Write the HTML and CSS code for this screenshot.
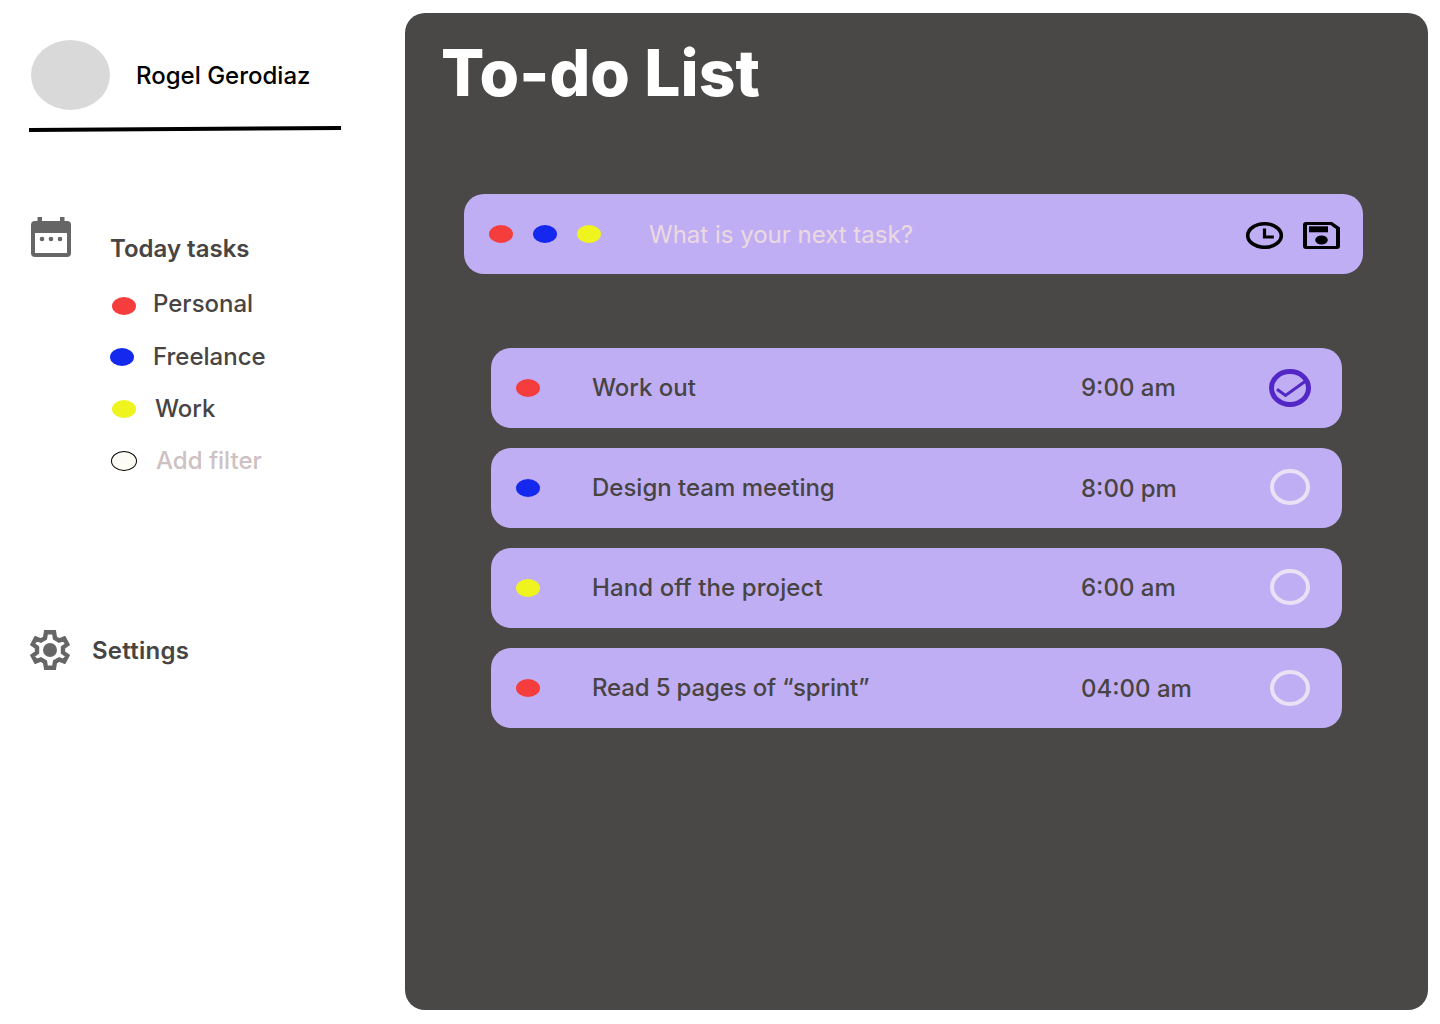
FILE: index.html
```html
<!DOCTYPE html>
<html lang="en">
<head>
<meta charset="utf-8">
<title>To-do List</title>
<link rel="stylesheet" href="styles.css">
</head>
<body>
<div class="app">
  <aside class="sidebar">
    <div class="profile">
      <span class="avatar"></span>
      <span class="profile-name">Rogel Gerodiaz</span>
    </div>
    <svg class="divider" width="312" height="7" viewBox="0 0 312 7"><path d="M0 5 312 3" stroke="#000" stroke-width="4"/></svg>
    <nav class="today">
      <svg class="calendar" width="40" height="40" viewBox="0 0 40 40"><path fill="#666" fill-rule="evenodd" d="M6.500 0h4.500v4h18V0h4.500v4H36a4 4 0 0 1 4 4v28a4 4 0 0 1-4 4H4a4 4 0 0 1-4-4V8a4 4 0 0 1 4-4h2.500zM4 16v20h32V16z"/><g fill="#666"><circle cx="11" cy="22" r="2.300"/><circle cx="20" cy="22" r="2.300"/><circle cx="29" cy="22" r="2.300"/></g></svg>
      <div class="filters">
        <h2 class="nav-title">Today tasks</h2>
        <div class="filter filter-personal"><i class="dot red"></i><span>Personal</span></div>
        <div class="filter filter-freelance"><i class="dot blue"></i><span>Freelance</span></div>
        <div class="filter filter-work"><i class="dot yellow"></i><span>Work</span></div>
        <div class="filter filter-add"><i class="dot empty"></i><span>Add filter</span></div>
      </div>
    </nav>
    <div class="settings">
      <svg width="40" height="40" viewBox="0 0 40 40"><path fill="none" stroke="#666" stroke-width="4.400" d="M16 2.200H24L25 8.200L29.100 10.500L34.200 8.600L37.300 14.300L33 17.500V22.500L37.300 25.700L34.200 31.400L29.100 29.500L25 31.800L24 37.800H16L15 31.800L10.900 29.500L5.800 31.400L2.700 25.700L7 22.500V17.500L2.700 14.300L5.800 8.600L10.900 10.500L15 8.200Z"/><circle cx="20" cy="20" r="7" fill="#666"/></svg>
      <span>Settings</span>
    </div>
  </aside>
  <main class="panel">
    <h1 class="title">To-do List</h1>
    <div class="new-task">
      <i class="dot red"></i><i class="dot blue"></i><i class="dot yellow"></i>
      <span class="prompt">What is your next task?</span>
      <svg class="clock" width="38" height="28" viewBox="0 0 38 28"><ellipse cx="19.500" cy="14.500" rx="16.800" ry="11.800" fill="none" stroke="#000" stroke-width="3.600"/><path d="M19.500 7.500v8.500h9.300" fill="none" stroke="#000" stroke-width="3.200"/></svg>
      <svg class="save" width="38" height="28" viewBox="0 0 38 28"><path fill-rule="evenodd" d="M4 1H30L38 6.500V25a3 3 0 0 1-3 3H4a3 3 0 0 1-3-3V4a3 3 0 0 1 3-3ZM5 4V25H34V8L28.500 4Z"/><path d="M7 5.300h19v6H7z"/><ellipse cx="19.500" cy="19" rx="6.300" ry="4.600"/></svg>
    </div>
    <div class="tasks">
      <div class="task"><i class="dot red"></i><span class="name">Work out</span><span class="time">9:00 am</span>
        <svg width="42" height="38" viewBox="0 0 42 38"><ellipse cx="21" cy="19" rx="18.500" ry="16.500" fill="none" stroke="#5227c5" stroke-width="5"/><path d="M8 20.300 16.500 26.500 37 11.800" fill="none" stroke="#5227c5" stroke-width="3"/></svg></div>
      <div class="task"><i class="dot blue"></i><span class="name">Design team meeting</span><span class="time lowered">8:00 pm</span>
        <svg class="open" width="42" height="38" viewBox="0 0 42 38"><ellipse cx="21" cy="19" rx="18" ry="16" fill="none" stroke="#e9e2f5" stroke-width="4"/></svg></div>
      <div class="task"><i class="dot yellow"></i><span class="name loose">Hand off the project</span><span class="time">6:00 am</span>
        <svg class="open" width="42" height="38" viewBox="0 0 42 38"><ellipse cx="21" cy="19" rx="18" ry="16" fill="none" stroke="#e9e2f5" stroke-width="4"/></svg></div>
      <div class="task"><i class="dot red"></i><span class="name tight">Read 5 pages of “sprint”</span><span class="time lowered">04:00 am</span>
        <svg width="42" height="38" viewBox="0 0 42 38"><ellipse cx="21" cy="19" rx="18" ry="16" fill="none" stroke="#e9e2f5" stroke-width="4"/></svg></div>
    </div>
  </main>
</div>
</body>
</html>
```
FILE: styles.css
```css
* { box-sizing: border-box; }
body {
  margin: 0;
  background: #fff;
  color: #474443;
  font: 500 24px/29px Inter, sans-serif;
}
h1, h2 { margin: 0; }
svg { display: block; flex: none; }
.app { display: flex; height: 1024px; padding: 13px 12px 14px 0; }
.sidebar { width: 405px; flex: none; padding: 27px 0 0 29px; }
.profile { display: flex; align-items: center; height: 70px; padding-left: 2px; gap: 26px; color: #000; }
.avatar { width: 79px; height: 70px; border-radius: 50%; background: #d9d9d9; }
.profile-name { white-space: nowrap; }
.divider { margin-top: 15px; }
.today { display: flex; margin-top: 85px; padding-left: 2px; }
.filters { padding: 17px 0 0 39px; }
.nav-title { font-size: 24px; line-height: 29px; font-weight: 600; }
.dot { display: block; flex: none; width: 24px; height: 18px; border-radius: 50%; }
.red { background: #f53d3d; }
.blue { background: #1429ed; }
.yellow { background: #eff41e; }
.empty { width: 26px; height: 20px; background: #fcfcf4; border: 1px solid #000; }
.filter { display: flex; align-items: center; height: 29px; margin-top: 23px; white-space: nowrap; }
.filter-personal { margin-top: 26px; gap: 17px; padding-left: 2px; }
.filter-personal .dot { margin-top: 5px; }
.filter-freelance { margin-top: 24px; gap: 19px; }
.filter-work { gap: 19px; padding-left: 2px; }
.filter-add { gap: 19px; padding-left: 1px; color: #cdc1c2; }
.filter-freelance .dot, .filter-work .dot, .filter-add .dot { margin-top: 1px; }
.settings {
  display: flex;
  align-items: center;
  gap: 22px;
  margin-top: 155px;
  padding-left: 1px;
  font-weight: 600;
  letter-spacing: 0.25px;
}
.panel { flex: 1; border-radius: 20px; background: #4a4846; }
.title {
  padding: 21px 0 0 36px;
  color: #fff;
  font-size: 64px;
  line-height: 77px;
  font-weight: 800;
  letter-spacing: 0.1px;
}
.new-task {
  display: flex;
  align-items: center;
  gap: 20px;
  width: 899px;
  height: 80px;
  margin: 83px 0 0 59px;
  padding: 0 23px 0 25px;
  border-radius: 20px;
  background: #c0aef5;
}
.prompt { flex: 1; margin-left: 28px; color: #ecd9df; font-weight: 400; }
.clock, .save { margin-top: 2px; }
.save { margin-left: -1px; }
.tasks { display: flex; flex-direction: column; gap: 20px; width: 851px; margin: 74px 0 0 86px; }
.task {
  display: grid;
  grid-template-columns: 76px 489px 188px 42px;
  align-items: center;
  height: 80px;
  padding-left: 25px;
  border-radius: 20px;
  background: #c0aef5;
}
.name, .time { padding-bottom: 1px; }
.time.lowered { padding: 1px 0 0; }
.loose { letter-spacing: 0.1px; }
.tight { letter-spacing: -0.15px; }
.open { margin-top: -2px; }
```
